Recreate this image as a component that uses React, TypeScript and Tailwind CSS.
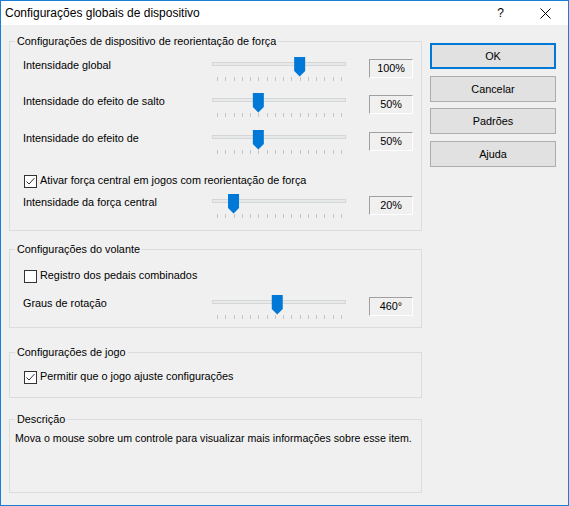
import React from "react";

const Slider = ({ frac }: { frac: number }) => {
  const L = 0.5 + frac * 124;
  const ticks = Array.from({ length: 16 }, (_, i) => Math.round(6 + (i * 124) / 15));
  return (
    <svg width="136" height="25" viewBox="0 0 136 25" className="shrink-0 block">
      <rect x="1.5" y="5.5" width="133" height="3" fill="#e7eaea" stroke="#d6d6d6" />
      {ticks.map((x, i) => (
        <rect key={i} x={x} y="20" width="1" height="4" fill="#c4c4c4" />
      ))}
      <polygon
        points={`${L},0 ${L + 11},0 ${L + 11},14 ${L + 5.5},19.5 ${L},14`}
        fill="#0078d7"
      />
    </svg>
  );
};

const SliderRow = ({ label, frac, value, className = "" }: { label: string; frac: number; value: string; className?: string }) => (
  <div className={`flex h-[25px] pl-[13px] ${className}`}>
    <div className="w-[188px] mt-[1px] leading-[15px] shrink-0">{label}</div>
    <Slider frac={frac} />
    <div className="ml-[22px] mt-[2px] w-[44px] h-[19px] shrink-0 flex items-center justify-center border-t border-l border-t-[#a0a0a0] border-l-[#a0a0a0] border-b border-r border-b-white border-r-white leading-[15px]">
      {value}
    </div>
  </div>
);

const CheckRow = ({ label, checked, className = "" }: { label: string; checked: boolean; className?: string }) => (
  <div className={`flex items-start h-[13px] pl-[14px] ${className}`}>
    <div className="w-[13px] h-[13px] border border-[#333333] bg-white shrink-0">
      {checked && (
        <svg width="11" height="11" viewBox="0 0 11 11" className="block">
          <polyline points="1.5,5.5 4,8 9.5,2" fill="none" stroke="#333333" strokeWidth="1" />
        </svg>
      )}
    </div>
    <div className="ml-[3px] mt-[-1px] leading-[12px] whitespace-nowrap">{label}</div>
  </div>
);

const Group = ({ title, className, children }: { title: string; className: string; children?: React.ReactNode }) => (
  <div className={`relative border border-[#dcdcdc] ${className}`}>
    <span className="absolute left-[5px] top-[-8px] px-[2px] bg-[#f0f0f0] leading-[15px] whitespace-nowrap">{title}</span>
    {children}
  </div>
);

const Button = ({ label, primary, className }: { label: string; primary?: boolean; className: string }) => (
  <div
    className={`h-[26px] w-[126px] flex items-center justify-center bg-[#e1e1e1] ${
      primary ? "border-2 border-[#0078d7]" : "border border-[#adadad]"
    } ${className}`}
  >
    {label}
  </div>
);

export default function App() {
  return (
    <div className="w-[569px] h-[506px] border border-[#1a7fd4] bg-[#f0f0f0] text-[10.85px] text-black font-['Liberation_Sans',Arial,sans-serif] flex flex-col overflow-hidden">
      <div className="h-[24px] bg-white flex items-center pl-[4px] shrink-0">
        <span className="leading-[15px] text-[12px]">Configurações globais de dispositivo</span>
        <span className="ml-auto text-[12px] leading-[15px]">?</span>
        <svg width="11" height="11" viewBox="0 0 11 11" className="ml-[36px] mr-[17px] block">
          <line x1="0.5" y1="0.5" x2="10.5" y2="10.5" stroke="#000" strokeWidth="1" />
          <line x1="10.5" y1="0.5" x2="0.5" y2="10.5" stroke="#000" strokeWidth="1" />
        </svg>
      </div>
      <div className="flex pl-[8px]">
        <div className="w-[413px] flex flex-col shrink-0">
          <Group title="Configurações de dispositivo de reorientação de força" className="mt-[16px] h-[190px] pt-[15px]">
            <SliderRow label="Intensidade global" frac={100 / 150} value="100%" />
            <SliderRow label="Intensidade do efeito de salto" frac={50 / 150} value="50%" className="mt-[11px]" />
            <SliderRow label="Intensidade do efeito de" frac={50 / 150} value="50%" className="mt-[12px]" />
            <CheckRow label="Ativar força central em jogos com reorientação de força" checked className="mt-[20px]" />
            <SliderRow label="Intensidade da força central" frac={20 / 150} value="20%" className="mt-[6px]" />
          </Group>
          <Group title="Configurações do volante" className="mt-[18px] h-[79px] pt-[20px]">
            <CheckRow label="Registro dos pedais combinados" checked={false} />
            <SliderRow label="Graus de rotação" frac={0.486} value="460°" className="mt-[12px]" />
          </Group>
          <Group title="Configurações de jogo" className="mt-[24px] h-[46px] pt-[18px]">
            <CheckRow label="Permitir que o jogo ajuste configurações" checked />
          </Group>
          <Group title="Descrição" className="mt-[21px] h-[74px] pt-[11px] pl-[5px]">
            <div className="leading-[15px] whitespace-nowrap text-[10.65px]">Mova o mouse sobre um controle para visualizar mais informações sobre esse item.</div>
          </Group>
        </div>
        <div className="ml-[8px] flex flex-col w-[126px]">
          <Button label="OK" primary className="mt-[18px]" />
          <Button label="Cancelar" className="mt-[7px]" />
          <Button label="Padrões" className="mt-[6px]" />
          <Button label="Ajuda" className="mt-[7px]" />
        </div>
      </div>
    </div>
  );
}
